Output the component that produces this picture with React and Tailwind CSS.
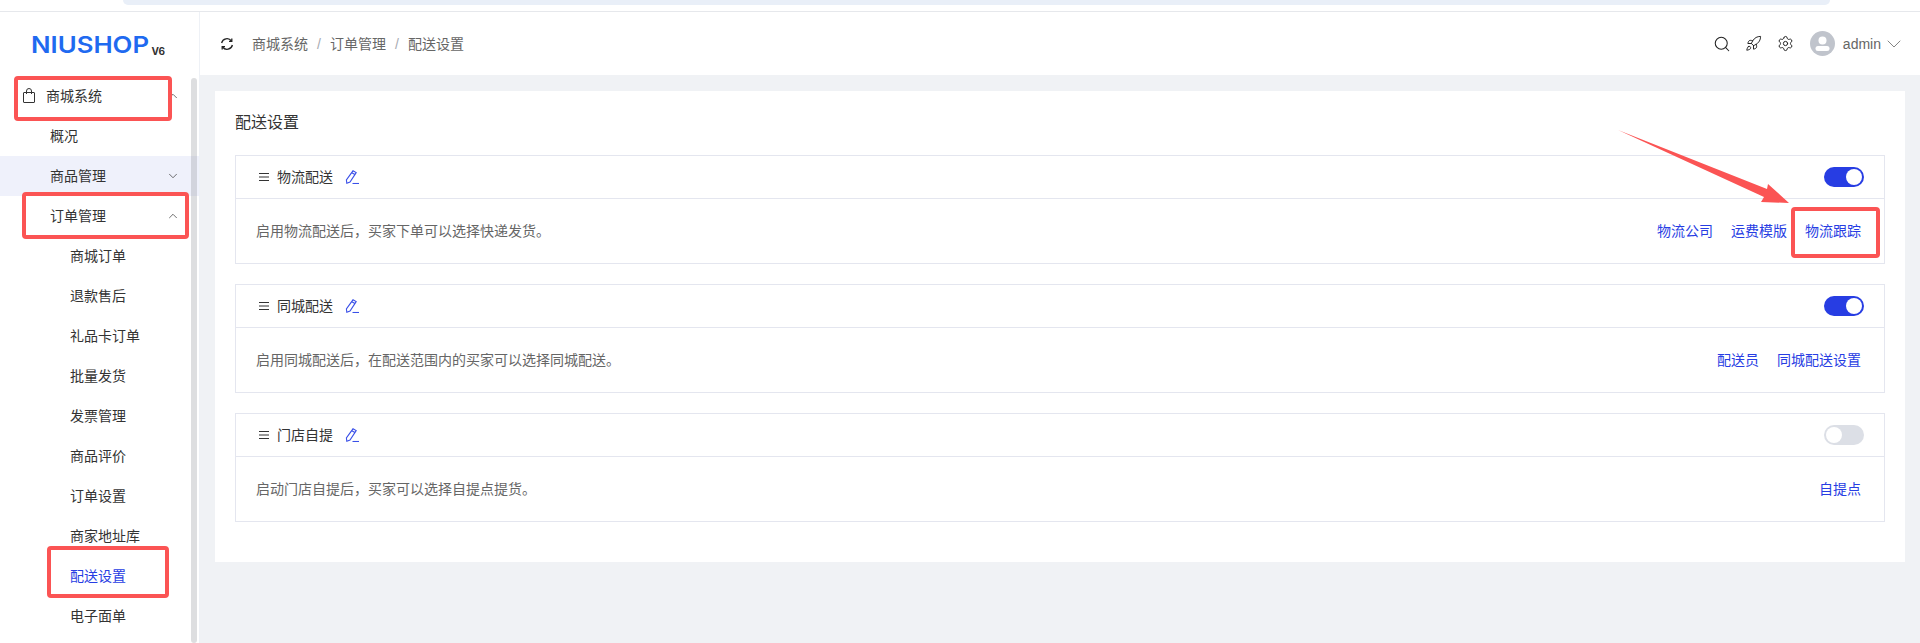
import React from "react";
import { ChevronDown, ChevronUp, Search, Rocket, Settings } from "lucide-react";

const subMenu = ["商城订单", "退款售后", "礼品卡订单", "批量发货", "发票管理", "商品评价", "订单设置", "商家地址库", "配送设置", "电子面单"];

const sections = [
  { name: "物流配送", desc: "启用物流配送后\uFF0C买家下单可以选择快递发货。", on: true, links: ["物流公司", "运费模版", "物流跟踪"] },
  { name: "同城配送", desc: "启用同城配送后\uFF0C在配送范围内的买家可以选择同城配送。", on: true, links: ["配送员", "同城配送设置"] },
  { name: "门店自提", desc: "启动门店自提后\uFF0C买家可以选择自提点提货。", on: false, links: ["自提点"] },
];

const BagIcon = () => (
  <svg width="14" height="16" viewBox="0 0 14 16" fill="none" stroke="#333" strokeWidth="1">
    <rect x="1.5" y="4.5" width="11" height="10" rx="0.5" />
    <path d="M4.5 6V3a2.5 2.5 0 0 1 5 0v3" />
  </svg>
);

const SyncIcon = () => (
  <svg width="14" height="14" viewBox="0 0 14 14" fill="none" stroke="#222" strokeWidth="1.3">
    <path d="M1.6 6A5.5 5.5 0 0 1 11.4 4" />
    <path d="M12.4 8A5.5 5.5 0 0 1 2.6 10" />
    <path d="M9 4.3h2.8V1.6" />
    <path d="M5 9.7H2.2v2.7" />
  </svg>
);

const LinesIcon = () => (
  <svg width="10" height="8" viewBox="0 0 10 8" stroke="#333" strokeWidth="1">
    <path d="M0 .5h10M0 4h10M0 7.5h10" />
  </svg>
);

const PenIcon = () => (
  <svg width="14" height="14" viewBox="0 0 14 14" fill="none" stroke="#3a50e8" strokeWidth="1.1">
    <path d="M8 .8 11.2 2.6 5 12 1.8 13.2 1.4 9.8z" />
    <path d="M6.8 2.8 10 4.6" />
    <path d="M7.5 13.5H14" />
  </svg>
);

const AvatarIcon = () => (
  <svg width="25" height="25" viewBox="0 0 25 25">
    <circle cx="12.5" cy="12.5" r="12.5" fill="#c0c4cc" />
    <circle cx="12.5" cy="9.5" r="4" fill="#fff" />
    <rect x="5.5" y="15" width="14" height="5" rx="2.5" fill="#fff" />
  </svg>
);

const Toggle = ({ on }) => (
  <div className={`w-10 h-5 rounded-full flex items-center px-0.5 ${on ? "bg-[#273de3] justify-end" : "bg-[#dcdfe6] justify-start"}`}>
    <div className="w-4 h-4 rounded-full bg-white" />
  </div>
);

const MenuItem = ({ children, open, closed, active, sub, hover }) => (
  <div className={`h-10 shrink-0 flex items-center justify-between pr-[19px] text-sm ${sub ? "pl-[70px]" : "pl-[50px]"} ${hover ? "bg-[#eff1fb]" : ""} ${active ? "text-[#273de3]" : "text-[#333]"}`}>
    <span>{children}</span>
    {open && <ChevronUp size={14} strokeWidth={1.2} />}
    {closed && <ChevronDown size={14} strokeWidth={1.2} />}
  </div>
);

const Section = ({ item }) => (
  <div className="border border-[#e4e6ef] h-[109px] flex flex-col">
    <div className="h-[43px] shrink-0 border-b border-[#e4e6ef] flex items-center justify-between pl-[23px] pr-[20px]">
      <div className="flex items-center text-sm text-[#333]">
        <LinesIcon />
        <span className="ml-2">{item.name}</span>
        <span className="ml-[12px]"><PenIcon /></span>
      </div>
      <Toggle on={item.on} />
    </div>
    <div className="flex-1 flex items-center justify-between pl-5 pr-[23px] text-sm">
      <span className="text-[#666]">{item.desc}</span>
      <div className="flex gap-[18px] text-[#273de3]">
        {item.links.map((l) => (
          <span key={l}>{l}</span>
        ))}
      </div>
    </div>
  </div>
);

export default function App() {
  return (
    <div
      className="relative w-[1920px] h-[643px] overflow-hidden bg-white flex flex-col"
      style={{ fontFamily: '"Liberation Sans", "Noto Sans CJK SC", sans-serif' }}
    >
      {/* browser strip */}
      <div className="h-3 shrink-0 border-b border-[#e6e8ec] pl-[123px] pr-[90px]">
        <div className="h-[5px] bg-[#e9eff8] rounded-b-[10px]" />
      </div>

      <div className="flex-1 flex min-h-0">
        {/* sidebar */}
        <aside className="relative w-[200px] shrink-0 border-r border-[#eef1f6] flex flex-col overflow-hidden">
          <div className="h-[64px] shrink-0 flex items-start pl-[31px] pt-[19px]">
            <span className="font-['Inter'] text-[23px] leading-[28px] font-semibold text-[#1f6af0] scale-x-[1.12] origin-left">NIUSHOP</span>
            <span className="font-['Inter'] text-[10px] leading-[14px] font-bold text-[#333] ml-[15px] mt-[13px]">V6</span>
          </div>
          <div className="h-10 shrink-0 flex items-center justify-between pl-[22px] pr-[19px] text-sm text-[#333]">
            <span className="flex items-center gap-[10px]"><BagIcon />商城系统</span>
            <ChevronUp size={14} strokeWidth={1.2} />
          </div>
          <MenuItem>概况</MenuItem>
          <MenuItem closed hover>商品管理</MenuItem>
          <MenuItem open>订单管理</MenuItem>
          {subMenu.map((m) => (
            <MenuItem key={m} sub active={m === "配送设置"}>{m}</MenuItem>
          ))}
          <div className="absolute right-[2px] top-[66px] bottom-0 w-[6px] rounded-full bg-[#909399]/30" />
        </aside>

        {/* main */}
        <div className="flex-1 flex flex-col min-w-0 bg-[#f0f2f5]">
          <header className="h-[63px] shrink-0 bg-white flex items-center justify-between pl-[20px] pr-[14px]">
            <div className="flex items-center text-sm text-[#666]">
              <SyncIcon />
              <span className="ml-[18px]">商城系统</span>
              <span className="w-[22px] text-center text-[#a8abb2]">/</span>
              <span>订单管理</span>
              <span className="w-[22px] text-center text-[#a8abb2]">/</span>
              <span>配送设置</span>
            </div>
            <div className="flex items-center text-[#222]">
              <Search size={18} strokeWidth={1.4} />
              <Rocket size={17} strokeWidth={1.4} className="ml-[14px]" />
              <Settings size={17} strokeWidth={1.4} className="ml-[15px]" />
              <span className="ml-[16px]"><AvatarIcon /></span>
              <span className="ml-2 text-sm text-[#666]">admin</span>
              <ChevronDown size={24} strokeWidth={0.8} className="ml-px text-[#666]" />
            </div>
          </header>

          <main className="flex-1 px-[15px] pt-[16px]">
            <div className="bg-white px-[20px] pt-[20px] h-[471px]">
              <h1 className="text-base leading-6 text-[#333] font-normal">配送设置</h1>
              <div className="mt-5 flex flex-col gap-5">
                {sections.map((s) => (
                  <Section key={s.name} item={s} />
                ))}
              </div>
            </div>
          </main>
        </div>
      </div>

      {/* red annotations drawn over the screenshot */}
      <div className="absolute left-[14px] top-[76px] w-[158px] h-[45px] border-4 border-[#fb5454] rounded-sm" />
      <div className="absolute left-[22px] top-[192px] w-[167px] h-[47px] border-4 border-[#fb5454] rounded-sm" />
      <div className="absolute left-[47px] top-[546px] w-[122px] h-[52px] border-4 border-[#fb5454] rounded-sm" />
      <div className="absolute left-[1791px] top-[207px] w-[89px] h-[51px] border-4 border-[#fb5454] rounded-sm" />
      <svg className="absolute left-[1610px] top-[120px]" width="190" height="90" viewBox="0 0 190 90">
        <path d="M8 10 L157 69 L158 64 L179 83 L151 82 L154 77 Z" fill="#fb5454" />
      </svg>
    </div>
  );
}
